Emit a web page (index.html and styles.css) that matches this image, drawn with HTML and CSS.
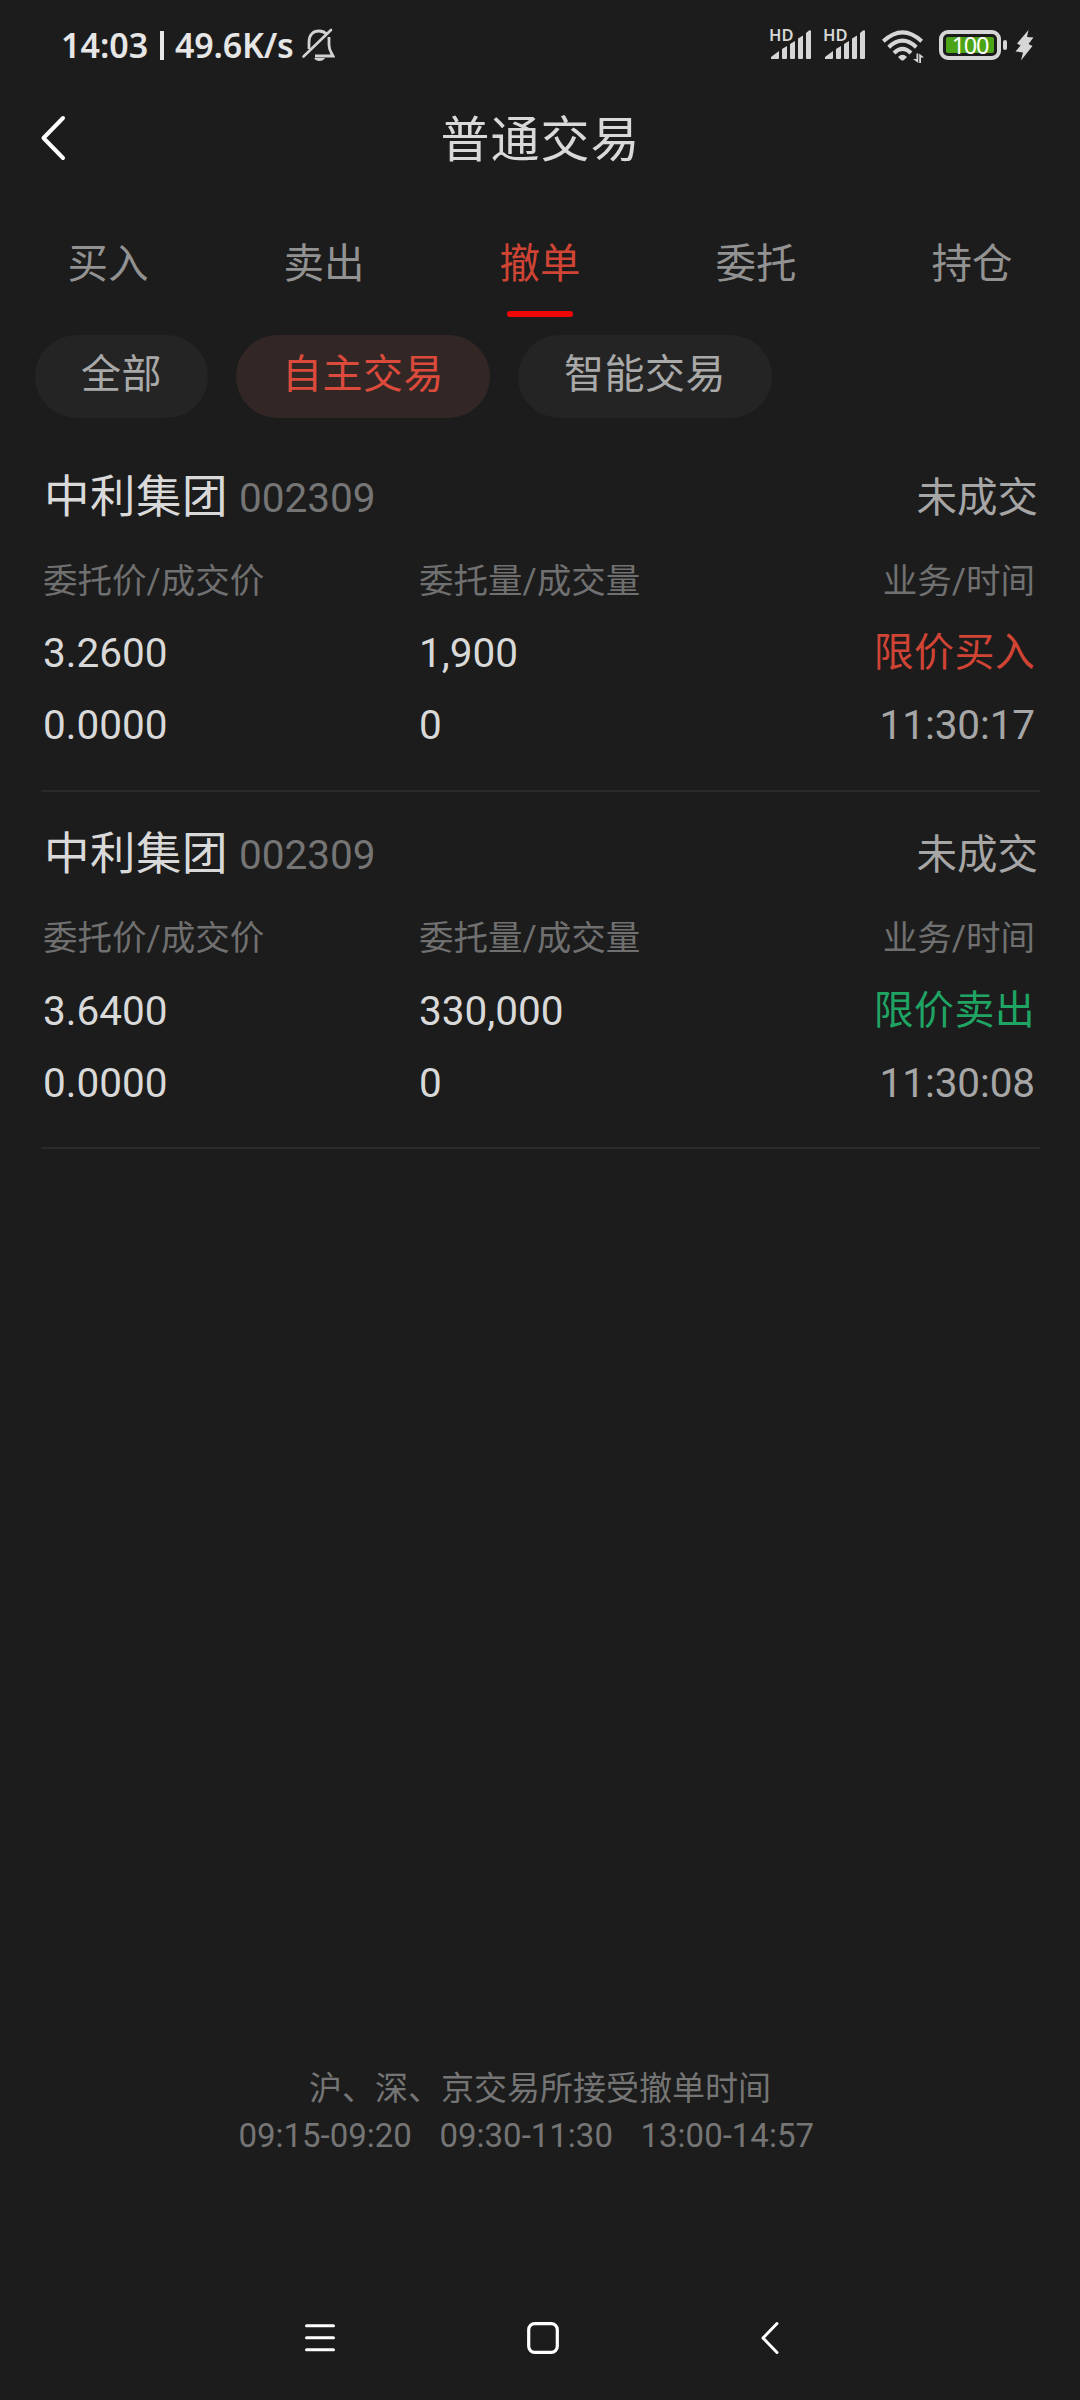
FILE: index.html
```html
<!DOCTYPE html>
<html lang="zh-CN">
<head>
<meta charset="utf-8">
<title>普通交易</title>
<link rel="stylesheet" href="styles.css">
</head>
<body>
<div class="screen">
  <div class="status">
    <div class="status-left">
      <span class="clock">14:03</span>
      <span class="bar"></span>
      <span class="speed">49.6K/s</span>
      <svg class="bell" width="34" height="34" viewBox="0 0 34 34">
        <path d="M8 21V14C8 7 12 3 18 3c3 0 5.500 1 7.500 3" fill="none" stroke="#d2d2d2" stroke-width="2.800"/>
        <path d="M28 9v8c0 5 2 7 4 11H14" fill="none" stroke="#d2d2d2" stroke-width="2.800"/>
        <path d="M2.500 28.500 30 2" fill="none" stroke="#d2d2d2" stroke-width="2.600" stroke-linecap="round"/>
        <path d="M13 30h11c-2 4-9 4-11 0z" fill="#d2d2d2"/>
      </svg>
    </div>
    <div class="status-right">
      <div class="signal">
        <span class="hd">HD</span>
        <svg width="41" height="30" viewBox="0 0 41 30" fill="#d6d6d6"><path d="M0 29v-2l8-6v7q0 1-1 1zM11 19l5-3v12q0 1-1 1h-3q-1 0-1-1zM19 14l5-3v17q0 1-1 1h-3q-1 0-1-1zM27 8.500l5-3V28q0 1-1 1h-3q-1 0-1-1zM35 3l3-2.500q2-1 2 1V28q0 1-1 1h-3q-1 0-1-1z"/></svg>
      </div>
      <div class="signal">
        <span class="hd">HD</span>
        <svg width="41" height="30" viewBox="0 0 41 30" fill="#d6d6d6"><path d="M0 29v-2l8-6v7q0 1-1 1zM11 19l5-3v12q0 1-1 1h-3q-1 0-1-1zM19 14l5-3v17q0 1-1 1h-3q-1 0-1-1zM27 8.500l5-3V28q0 1-1 1h-3q-1 0-1-1zM35 3l3-2.500q2-1 2 1V28q0 1-1 1h-3q-1 0-1-1z"/></svg>
      </div>
      <svg class="wifi" width="44" height="34" viewBox="0 0 44 34">
        <g fill="none" stroke="#d6d6d6" stroke-width="4">
          <path d="M2.300 11.200Q21.500-6.600 40.700 11.200"/><path d="M7.700 17.200Q21.500 4.200 35.300 17.200"/><path d="M13 23Q21.500 14.700 30 23"/>
        </g>
        <path d="M17 27q4.500-4.500 9 0l-3 3q-1.500 1-3 0z" fill="#d6d6d6"/>
        <path d="M32 29h3.500v-5.500h1.800V33zM43 27.500h-3V33h-1.800v-9.500z" fill="#d6d6d6"/>
      </svg>
      <div class="battery"><div class="charge">100</div></div>
      <div class="nub"></div>
      <svg class="bolt" width="19" height="31" viewBox="0 0 19 31"><path d="M13.500 0 12 7 18.500 7.500 13.500 14 17.500 16 6 30.500 8 22.500 0.500 21.500 5.500 15.500 2 13.500z" fill="#d6d6d6"/></svg>
    </div>
  </div>

  <header class="header">
    <svg class="back" width="26" height="46" viewBox="0 0 26 46"><path d="M23 3 3.500 23 23 43" fill="none" stroke="#fff" stroke-width="4" stroke-linecap="round" stroke-linejoin="round"/></svg>
    <h1 class="title">普通交易</h1>
  </header>

  <nav class="tabs">
    <a class="tab">买入</a><a class="tab">卖出</a><a class="tab active">撤单</a><a class="tab">委托</a><a class="tab">持仓</a>
  </nav>

  <div class="filters">
    <span class="pill all">全部</span><span class="pill selected">自主交易</span><span class="pill">智能交易</span>
  </div>

  <section class="order">
    <div class="order-head"><span class="name">中利集团</span><span class="code">002309</span><span class="state">未成交</span></div>
    <div class="cells labels"><span>委托价/成交价</span><span>委托量/成交量</span><span>业务/时间</span></div>
    <div class="cells values"><span>3.2600</span><span>1,900</span><span class="buy">限价买入</span></div>
    <div class="cells values"><span>0.0000</span><span>0</span><span class="time">11:30:17</span></div>
  </section>
  <section class="order">
    <div class="order-head"><span class="name">中利集团</span><span class="code">002309</span><span class="state">未成交</span></div>
    <div class="cells labels"><span>委托价/成交价</span><span>委托量/成交量</span><span>业务/时间</span></div>
    <div class="cells values"><span>3.6400</span><span>330,000</span><span class="sell">限价卖出</span></div>
    <div class="cells values"><span>0.0000</span><span>0</span><span class="time">11:30:08</span></div>
  </section>

  <footer class="notice">
    <p>沪、深、京交易所接受撤单时间</p>
    <p class="hours">09:15-09:20   09:30-11:30   13:00-14:57   </p>
  </footer>

  <div class="sysnav">
    <svg width="30" height="34" viewBox="0 0 30 34"><path d="M1.500 4.700h27M1.500 16.700h27M1.500 28.700h27" stroke="#fff" stroke-width="3" stroke-linecap="round"/></svg>
    <svg class="home" width="32" height="34" viewBox="0 0 32 34"><rect x="1.700" y="2.700" width="28.600" height="28.600" rx="6" fill="none" stroke="#fff" stroke-width="3.200"/></svg>
    <svg width="20" height="34" viewBox="0 0 20 34"><path d="M17 2.500 3 17 17 31.500" fill="none" stroke="#fff" stroke-width="3" stroke-linecap="round" stroke-linejoin="round"/></svg>
  </div>
</div>
</body>
</html>
```
FILE: styles.css
```css
* { box-sizing: border-box; margin: 0; padding: 0; }
body { background: #1c1c1c; }
.screen {
  width: 1080px; height: 2400px; overflow: hidden;
  display: flex; flex-direction: column;
  background: #1c1c1c; color: #d9d9d9;
  font-family: Roboto, "Noto Sans CJK SC", sans-serif;
}

.status { height: 90px; flex: none; display: flex; justify-content: space-between; padding: 0 46px 0 61px; font-family: "Noto Sans", sans-serif; }
.status-left, .status-right { display: flex; align-items: flex-start; }
.clock, .speed { font-size: 34px; line-height: 40px; font-weight: 600; color: #e6e6e6; margin-top: 25px; white-space: nowrap; }
.clock { width: 99px; }
.bar { width: 4px; height: 29px; background: #e6e6e6; margin-top: 31px; }
.speed { width: 126px; margin-left: 11px; letter-spacing: -0.200px; }
.bell { margin-top: 28px; }
.signal { width: 41px; margin: 30px 13px 0 0; position: relative; }
.signal svg { display: block; }
.hd { position: absolute; left: -2px; top: -6px; font-size: 16.500px; line-height: 22px; font-weight: 600; color: #d6d6d6; }
.wifi { margin: 30px 0 0 2px; }
.battery { width: 62px; height: 30px; margin: 30px 2px 0 14px; border: 4px solid #d6d6d6; border-radius: 9px; padding: 3px; }
.charge { height: 16px; border-radius: 2px; background: #4ca516; color: #fff; font-size: 23.500px; line-height: 17px; font-weight: 400; text-align: center; letter-spacing: -1.200px; }
.nub { width: 4px; height: 10px; border-radius: 2px; background: #d6d6d6; margin-top: 40px; }
.bolt { margin: 30px 0 0 8px; }

.header { height: 100px; flex: none; display: flex; align-items: center; padding: 0 40px; }
.back { margin-top: -4px; }
.title { flex: 1; margin: 2px 26px 0 1px; text-align: center; font-size: 49px; letter-spacing: 1px; line-height: 60px; font-weight: 400; }

.tabs { height: 127px; flex: none; display: flex; }
.tab { width: 216px; display: flex; flex-direction: column; align-items: center; padding-top: 50px; font-size: 40.500px; line-height: 48px; color: #929292; }
.tab.active { color: #d04436; }
.tab.active::after { content: ""; width: 66px; height: 6px; margin-top: 23px; border-radius: 3px; background: #f00808; }

.filters { flex: none; display: flex; gap: 28px; padding: 18px 35px 0; height: 118px; }
.pill { width: 254px; height: 83px; border-radius: 42px; background: #242424; color: #a9a9a9; font-size: 40px; letter-spacing: 0.500px; line-height: 80px; text-align: center; }
.pill.all { width: 173px; }
.pill.selected { background: #332726; color: #dc4a3c; }

.order { flex: none; height: 357px; margin: 0 40px 0 41px; border-bottom: 2px solid #2a2a2a; display: flex; flex-direction: column; }
.order-head { display: flex; align-items: baseline; height: 116px; padding: 32px 2px 0 3px; line-height: 60px; }
.name { font-size: 45.500px; letter-spacing: 0.500px; position: relative; top: 1px; }
.code { font-size: 40.500px; color: #757575; margin-left: 11px; }
.state { font-size: 40.500px; color: #a6a6a6; margin-left: auto; }
.cells { display: grid; grid-template-columns: 376px 1fr 300px; padding: 0 5px 0 2px; }
.cells > :last-child { text-align: right; }
.labels { font-size: 34.500px; height: 66px; line-height: 60px; color: #707070; }
.order + .order .labels { height: 67px; }
.values { font-size: 40.500px; height: 72px; line-height: 72px; }
.cells > .buy, .cells > .sell { font-size: 40px; letter-spacing: 0.300px; }
.buy { color: #d04436; }
.sell { color: #1fa463; }
.time { color: #a6a6a6; letter-spacing: -0.100px; }

.notice { margin-top: auto; height: 235px; flex: none; text-align: center; color: #757575; font-size: 33px; line-height: 47px; }
.hours { white-space: pre; word-spacing: 1px; }
.sysnav { height: 100px; flex: none; display: flex; align-items: flex-start; padding: 21px 300px 0 305px; }
.home { margin: 0 201px 0 192px; }
```
